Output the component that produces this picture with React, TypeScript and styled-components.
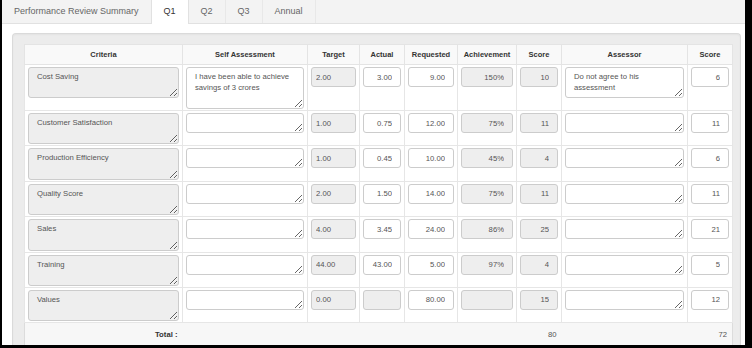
import React, { FC } from 'react'
import styled, { createGlobalStyle } from 'styled-components'

interface IRow {
    criteria: string;
    self: string;
    selfHeight?: number;
    target: string;
    actual: string;
    actualLocked?: boolean;
    requested: string;
    achievement: string;
    score: string;
    assessor: string;
    assessorHeight?: number;
    assessorScore: string;
}

const rows: IRow[] = [
    { criteria: 'Cost Saving', self: 'I have been able to achieve savings of 3 crores', selfHeight: 42, target: '2.00', actual: '3.00', requested: '9.00', achievement: '150%', score: '10', assessor: 'Do not agree to his assessment', assessorHeight: 31, assessorScore: '6' },
    { criteria: 'Customer Satisfaction', self: '', target: '1.00', actual: '0.75', requested: '12.00', achievement: '75%', score: '11', assessor: '', assessorScore: '11' },
    { criteria: 'Production Efficiency', self: '', target: '1.00', actual: '0.45', requested: '10.00', achievement: '45%', score: '4', assessor: '', assessorScore: '6' },
    { criteria: 'Quality Score', self: '', target: '2.00', actual: '1.50', requested: '14.00', achievement: '75%', score: '11', assessor: '', assessorScore: '11' },
    { criteria: 'Sales', self: '', target: '4.00', actual: '3.45', requested: '24.00', achievement: '86%', score: '25', assessor: '', assessorScore: '21' },
    { criteria: 'Training', self: '', target: '44.00', actual: '43.00', requested: '5.00', achievement: '97%', score: '4', assessor: '', assessorScore: '5' },
    { criteria: 'Values', self: '', target: '0.00', actual: '', actualLocked: true, requested: '80.00', achievement: '', score: '15', assessor: '', assessorScore: '12' },
]

const tabs = ['Performance Review Summary', 'Q1', 'Q2', 'Q3', 'Annual']
const heads = ['Criteria', 'Self Assessment', 'Target', 'Actual', 'Requested', 'Achievement', 'Score', 'Assessor', 'Score']
const colWidths = [158, 125, 52, 45, 53, 59, 45, 126, 45]

const GlobalStyle = createGlobalStyle`
    html, body {
        margin: 0;
        padding: 0;
        background: #000;
    }
    body {
        font-family: "Liberation Sans", Arial, sans-serif;
    }
`

const Frame = styled.div`
    width: 752px;
    height: 348px;
    box-sizing: border-box;
    padding: 0 7px 3px 2px;
    background: #000;
    overflow: hidden;
`

const Screen = styled.div`
    height: 100%;
    background: #fff;
    overflow: hidden;
    display: flex;
    flex-direction: column;
`

const TabBar = styled.div`
    display: flex;
    flex-shrink: 0;
    height: 23px;
    background: #f3f3f3;
    border-bottom: 1px solid #e1e1e1;
`

const Tab = styled.div<{ $active?: boolean }>`
    padding: 0 12px;
    height: ${p => p.$active ? '24px' : '23px'};
    line-height: 23px;
    font-size: 9px;
    color: ${p => p.$active ? '#333' : '#666'};
    background: ${p => p.$active ? '#fff' : 'transparent'};
    border-left: ${p => p.$active ? '1px solid #e1e1e1' : 'none'};
    border-right: 1px solid ${p => p.$active ? '#e1e1e1' : '#e8e8e8'};
    margin-left: ${p => p.$active ? '-1px' : '0'};
    white-space: nowrap;
`

const Content = styled.div`
    flex: 1;
    padding: 9px 4px 0 10px;
    min-height: 0;
`

const Panel = styled.div`
    height: 100%;
    box-sizing: border-box;
    background: #ececec;
    border: 1px solid #dadada;
    border-bottom: none;
    border-radius: 4px 4px 0 0;
    padding: 10px 8px 0 11px;
    box-shadow: inset 0 1px 2px rgba(0, 0, 0, 0.04);
`

const Table = styled.table`
    width: 708px;
    border-collapse: collapse;
    table-layout: fixed;
    background: #fff;
    border: 1px solid #dcdcdc;
    font-size: 7.7px;
    color: #555;
`

const HeadCell = styled.th`
    height: 19px;
    padding: 0 3px;
    background: #f9f9f9;
    border: 1px solid #e4e4e4;
    font-weight: bold;
    color: #333;
    text-align: center;
    font-size: 7.5px;
`

const Cell = styled.td`
    padding: 2px 3px 1px 3px;
    vertical-align: top;
    border: 1px solid #e6e6e6;
`

const TotalCell = styled.td<{ $label?: boolean }>`
    padding: 7px 5px 0 3px;
    height: 20px;
    vertical-align: top;
    text-align: right;
    background: #f7f7f7;
    border-top: 1px solid #e6e6e6;
    font-weight: ${p => p.$label ? 'bold' : 'normal'};
    color: ${p => p.$label ? '#333' : '#555'};
`

const Area = styled.textarea<{ $locked?: boolean; $h: number }>`
    display: block;
    width: 100%;
    height: ${p => p.$h}px;
    box-sizing: border-box;
    margin: 0;
    padding: 4px 8px;
    font-family: inherit;
    font-size: 7.7px;
    line-height: 1.42;
    color: #555;
    background: ${p => p.$locked ? '#eee' : '#fff'};
    border: 1px solid #ccc;
    border-radius: 3px;
    overflow: hidden;
    outline: none;
    resize: vertical;
`

const Field = styled.input<{ $locked?: boolean; $align?: 'left' | 'right' }>`
    display: block;
    width: 100%;
    height: 20px;
    box-sizing: border-box;
    margin: 0;
    padding: 0 ${p => p.$align === 'left' ? '4px' : '8px'};
    font-family: inherit;
    font-size: 7.7px;
    color: #555;
    text-align: ${p => p.$align ?? 'right'};
    background: ${p => p.$locked ? '#eee' : '#fff'};
    border: 1px solid #ccc;
    border-radius: 3px;
    outline: none;
`

const ReviewRow: FC<{ row: IRow }> = ({ row }) => (
    <tr>
        <Cell><Area $locked $h={31.4} readOnly value={row.criteria} /></Cell>
        <Cell><Area $h={row.selfHeight ?? 20} readOnly value={row.self} /></Cell>
        <Cell><Field $locked $align="left" readOnly value={row.target} /></Cell>
        <Cell><Field $locked={row.actualLocked} readOnly value={row.actual} /></Cell>
        <Cell><Field readOnly value={row.requested} /></Cell>
        <Cell><Field $locked readOnly value={row.achievement} /></Cell>
        <Cell><Field $locked readOnly value={row.score} /></Cell>
        <Cell><Area $h={row.assessorHeight ?? 20} readOnly value={row.assessor} /></Cell>
        <Cell><Field readOnly value={row.assessorScore} /></Cell>
    </tr>
)

export default function App() {
    return (
        <React.Fragment>
            <GlobalStyle />
            <Frame>
                <Screen>
                    <TabBar>
                        {tabs.map(t => <Tab key={t} $active={t === 'Q1'}>{t}</Tab>)}
                    </TabBar>
                    <Content>
                        <Panel>
                            <Table>
                                <colgroup>
                                    {colWidths.map((w, i) => <col key={i} style={{ width: w }} />)}
                                </colgroup>
                                <thead>
                                    <tr>{heads.map((h, i) => <HeadCell key={i}>{h}</HeadCell>)}</tr>
                                </thead>
                                <tbody>
                                    {rows.map(r => <ReviewRow key={r.criteria} row={r} />)}
                                    <tr>
                                        <TotalCell $label>Total :</TotalCell>
                                        <TotalCell colSpan={5} />
                                        <TotalCell>80</TotalCell>
                                        <TotalCell />
                                        <TotalCell>72</TotalCell>
                                    </tr>
                                </tbody>
                            </Table>
                        </Panel>
                    </Content>
                </Screen>
            </Frame>
        </React.Fragment>
    )
}
